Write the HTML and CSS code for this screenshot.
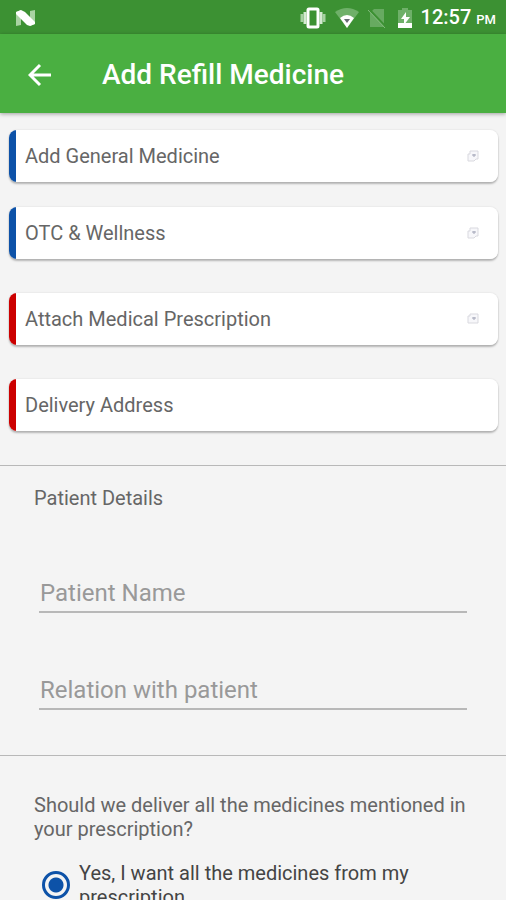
FILE: index.html
```html
<!DOCTYPE html>
<html lang="en">

<head>
    <meta charset="UTF-8">
    <meta name="viewport" content="width=device-width, initial-scale=1.0">
    <title>Add Refill Medicine</title>
    <link rel="stylesheet" href="styles.css">
</head>

<body>
    <div class="status-bar">
        <svg class="status-logo" width="22" height="18" viewBox="0 0 22 18">
            <path d="M1 3l5-2v15l-5 1zM15 2l5-1v14l-5 2z" fill="#a9d3a3"/>
            <path d="M1 3l5-2 4 2 10 10v2l-5 2-3-1L1 5z" fill="#fff"/>
        </svg>
        <div class="status-icons">
            <!-- vibrate -->
            <svg width="26" height="22" viewBox="0 0 26 22">
                <rect x="8" y="2" width="10" height="18" rx="1" fill="none" stroke="#fff" stroke-width="3"/>
                <path d="M5 5v12M21 5v12" stroke="#d4ead1" stroke-width="3"/>
                <path d="M2 7v8M24 7v8" stroke="#a6d1a1" stroke-width="3"/>
            </svg>
            <!-- wifi -->
            <svg width="24" height="20" viewBox="0 0 24 20">
                <path d="M0 4Q12-4 24 4L12 20z" fill="#6fb069"/>
                <path d="M5 10Q12 4 19 10L12 20z" fill="#fff"/>
                <path d="M9 11h6l-3 4z" fill="#666b73"/>
            </svg>
            <!-- no sim -->
            <svg width="18" height="20" viewBox="0 0 18 20">
                <path d="M6 1h10v18H2V5z" fill="#67aa61"/>
                <path d="M1 1l17 18" stroke="#3c9133" stroke-width="2"/>
                <path d="M0 2l17 18" stroke="#82bb7d" stroke-width="1"/>
            </svg>
            <!-- battery -->
            <svg class="battery" width="14" height="20" viewBox="0 0 14 20">
                <path d="M4 0h6v2h4v18H0V2h4z" fill="#6fb069"/>
                <path d="M0 15h14v5H0z" fill="#fff"/>
                <path d="M8 4l-5 7h3v6l6-8H8z" fill="#fff"/>
            </svg>
            <span class="clock">12:57 <small>PM</small></span>
        </div>
    </div>

    <header class="app-bar">
        <button class="back-btn" type="button" aria-label="Back">
            <svg width="24" height="24" viewBox="0 0 24 24">
                <path d="M23 12H2M12 2L2 12l10 10" fill="none" stroke="#fff" stroke-width="3"/>
            </svg>
        </button>
        <h1>Add Refill Medicine</h1>
    </header>

    <main class="content">
        <div class="order-list">
            <div class="order-group">
                <button class="order-card" type="button">
                    <span>Add General Medicine</span>
                    <svg class="add-icon" width="12" height="12" viewBox="0 0 12 12">
                        <path d="M3 1h8v8H9l-2 2H1V4h2z" fill="#f7f7fa" stroke="#d9d9df"/>
                        <path d="M7 4v3M5 5h4" stroke="#a3a6b8"/>
                    </svg>
                </button>
                <button class="order-card" type="button">
                    <span>OTC &amp; Wellness</span>
                    <svg class="add-icon" width="12" height="12" viewBox="0 0 12 12">
                        <path d="M3 1h8v8H9l-2 2H1V4h2z" fill="#f7f7fa" stroke="#d9d9df"/>
                        <path d="M7 4v3M5 5h4" stroke="#a3a6b8"/>
                    </svg>
                </button>
            </div>
            <button class="order-card required" type="button">
                <span>Attach Medical Prescription</span>
                <svg class="add-icon" width="12" height="12" viewBox="0 0 12 12">
                    <path d="M3 1h8v9H1V3h2z" fill="#f7f7fa" stroke="#d9d9df"/>
                    <path d="M7 4v3M5 5h4" stroke="#a3a6b8"/>
                </svg>
            </button>
            <button class="order-card required" type="button">
                <span>Delivery Address</span>
            </button>
        </div>

        <section class="patient">
            <h2>Patient Details</h2>
            <input type="text" class="text-field" placeholder="Patient Name" aria-label="Patient Name">
            <input type="text" class="text-field" placeholder="Relation with patient" aria-label="Relation with patient">
        </section>

        <section class="delivery">
            <p id="deliverQuestion">Should we deliver all the medicines mentioned in your prescription?</p>
            <div class="option" role="radiogroup" aria-labelledby="deliverQuestion">
                <input type="radio" id="allMedicines" name="deliver" value="all" checked>
                <label for="allMedicines">Yes, I want all the medicines from my prescription</label>
            </div>
        </section>
    </main>
</body>

</html>
```
FILE: styles.css
```css
* {
    box-sizing: border-box;
}

body {
    margin: 0;
    height: 100vh;
    display: flex;
    flex-direction: column;
    background-color: #f4f4f4;
    color: #666;
    font-family: Roboto, "Liberation Sans", sans-serif;
    font-size: 20px;
    line-height: 24px;
}

button,
input {
    font: inherit;
    color: inherit;
}

h1,
h2,
p {
    margin: 0;
    font-weight: 400;
}

.status-bar {
    flex: none;
    display: flex;
    align-items: center;
    justify-content: space-between;
    height: 34px;
    padding: 2px 10px 0 15px;
    background-color: #3c9133;
}

.status-icons {
    display: flex;
    align-items: center;
    gap: 9px;
}

.battery {
    margin-left: 3px;
}

.clock {
    color: #fff;
    font-weight: 500;
}

.clock small {
    font-size: 13px;
}

.app-bar {
    flex: none;
    display: flex;
    align-items: center;
    gap: 50px;
    height: 79px;
    padding: 2px 28px 0;
    background-color: #4aaf41;
    box-shadow: 0 1px 4px rgba(0, 0, 0, 0.35);
    z-index: 1;
}

.back-btn {
    display: flex;
    padding: 0;
    border: none;
    background: none;
    cursor: pointer;
}

.app-bar h1 {
    color: #fff;
    font-size: 28px;
    font-weight: 500;
    line-height: 32px;
}

.content {
    flex: 1;
    overflow-y: auto;
    scrollbar-width: none;
}

.order-list {
    display: grid;
    gap: 34px;
    padding: 17px 8px 34px 9px;
}

.order-group {
    display: grid;
    gap: 25px;
}

.order-card {
    display: flex;
    align-items: center;
    justify-content: space-between;
    width: 100%;
    height: 52px;
    padding: 0 19px 0 16px;
    border: none;
    border-radius: 8px;
    background: linear-gradient(to right, #0d52a8 7px, #fff 7px);
    box-shadow: 0 2px 2px rgba(0, 0, 0, 0.25), 0 0 2px rgba(0, 0, 0, 0.12);
    text-align: left;
    cursor: pointer;
}

.order-card.required {
    background: linear-gradient(to right, #cc0000 7px, #fff 7px);
}

.patient,
.delivery {
    border-top: 1px solid #b8b8b8;
}

.patient {
    padding: 20px 39px 45px;
}

.patient h2 {
    margin: 0 -5px 60px;
    font-size: 20px;
}

.text-field {
    display: block;
    width: 100%;
    height: 43px;
    padding: 4px 1px 0;
    border: none;
    border-bottom: 2px solid #b8b8b8;
    border-radius: 0;
    background: none;
    font-size: 24px;
    outline: none;
}

.text-field + .text-field {
    margin-top: 54px;
}

.text-field::placeholder {
    color: #999;
    opacity: 1;
}

.delivery {
    padding: 37px 34px;
}

.option {
    display: flex;
    align-items: center;
    gap: 9px;
    margin-top: 20px;
    padding: 0 8px;
    color: #444;
}

.option input {
    appearance: none;
    flex: none;
    width: 28px;
    height: 28px;
    margin: 0;
    border: 3px solid #0d52a8;
    border-radius: 50%;
    background: radial-gradient(circle, #0d52a8 7px, transparent 8px);
}
```
